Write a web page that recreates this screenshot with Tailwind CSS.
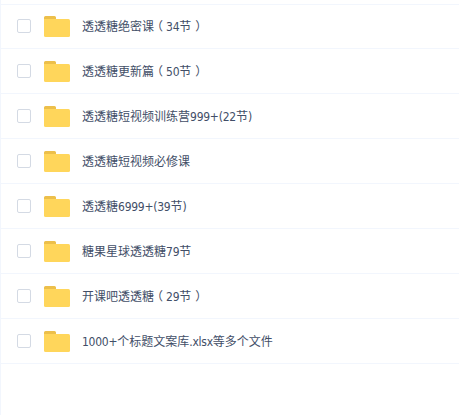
<!DOCTYPE html>
<html lang="zh-CN">
<head>
  <meta charset="UTF-8">
  <meta name="viewport" content="width=device-width, initial-scale=1.0">
  <title>文件列表</title>
  <script src="https://cdn.jsdelivr.net/npm/@tailwindcss/browser@4"></script>
</head>
<body class="bg-white overflow-hidden">

  <div class="h-screen border-l border-[#f2f6fd] font-['DejaVu_Sans_Condensed','Noto_Sans_CJK_SC',sans-serif] text-xs text-[#424e67]">
    <div class="h-[5px] border-b border-[#f2f6fd]"></div>
    <ul id="fileList" class="-mt-px"></ul>
  </div>

  <template id="rowTemplate">
    <li class="flex items-center h-[45px] pl-4 border-b border-[#f2f6fd]">
      <span class="size-3.5 shrink-0 rounded-xs border border-[#d4dae4] bg-white"></span>
      <svg class="ml-[13px] w-[26px] h-[21px] shrink-0" viewBox="0 0 26 21">
        <path fill="#ecbf4b" d="M0 4V1.5a1.5 1.5 0 0 1 1.5-1.5h9a1.5 1.5 0 0 1 1.5 1.5v2.5z"/>
        <path fill="#ffd65b" d="M0 3h24.5a1.5 1.5 0 0 1 1.5 1.5v15a1.5 1.5 0 0 1-1.5 1.5H1.5a1.5 1.5 0 0 1-1.5-1.5z"/>
      </svg>
      <span class="name ml-3 pt-0.5 whitespace-nowrap leading-[18px]"></span>
    </li>
  </template>

  <script>
    const files = [
      '透透糖绝密课（34节）',
      '透透糖更新篇（50节）',
      '透透糖短视频训练营999+(22节)',
      '透透糖短视频必修课',
      '透透糖6999+(39节)',
      '糖果星球透透糖79节',
      '开课吧透透糖（29节）',
      '1000+个标题文案库.xlsx等多个文件'
    ];

    const list = document.getElementById('fileList');
    const template = document.getElementById('rowTemplate');

    files.forEach(function(file) {
      const row = template.content.cloneNode(true);
      const name = row.querySelector('.name');
      file.split(/([\x20-\x7e]+|[（）])/).forEach(function(part) {
        const span = document.createElement('span');
        span.textContent = part;
        // half-width bracket glyphs, padded back to a full cell
        if (part === '（') {
          span.className = "[font-feature-settings:'halt'] pl-[3px] pr-[3px]";
        } else if (part === '）') {
          span.className = "[font-feature-settings:'halt'] pl-[4px] pr-[2px]";
        } else if (/^[\x20-\x7e]/.test(part)) {
          span.className = 'tracking-[-0.25px]';
        }
        name.appendChild(span);
      });
      list.appendChild(row);
    });
  </script>

</body>
</html>
